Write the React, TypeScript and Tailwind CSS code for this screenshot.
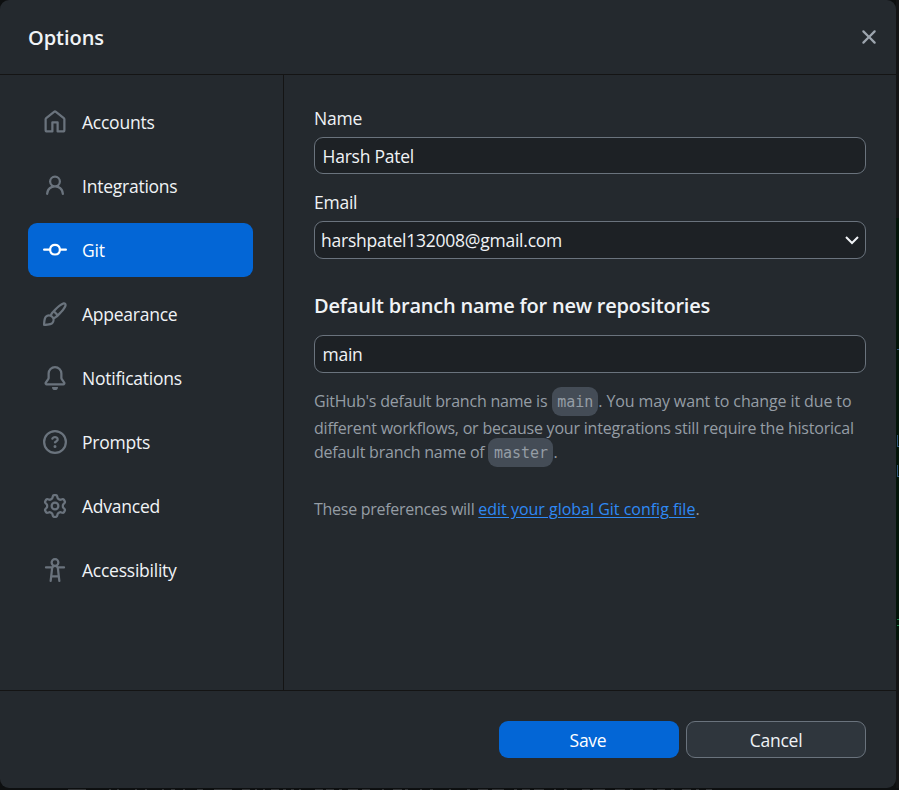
import React from 'react';

const icons = {
  home: 'M6.906.664a1.749 1.749 0 0 1 2.187 0l5.25 4.2c.415.332.657.835.657 1.367v7.019A1.75 1.75 0 0 1 13.25 15h-3.5a.75.75 0 0 1-.75-.75V9H7v5.25a.75.75 0 0 1-.75.75h-3.5A1.75 1.75 0 0 1 1 13.25V6.23c0-.531.242-1.034.657-1.366l5.25-4.2Zm1.25 1.171a.25.25 0 0 0-.312 0l-5.25 4.2a.25.25 0 0 0-.094.196v7.019c0 .138.112.25.25.25H5.5V8.25a.75.75 0 0 1 .75-.75h3.5a.75.75 0 0 1 .75.75v5.25h2.75a.25.25 0 0 0 .25-.25V6.23a.25.25 0 0 0-.094-.195Z',
  person: 'M10.561 8.073a6.005 6.005 0 0 1 3.432 5.142.75.75 0 1 1-1.498.07 4.5 4.5 0 0 0-8.99 0 .75.75 0 0 1-1.498-.07 6.004 6.004 0 0 1 3.431-5.142 3.999 3.999 0 1 1 5.123 0ZM10.5 5a2.5 2.5 0 1 0-5 0 2.5 2.5 0 0 0 5 0Z',
  commit: 'M11.93 8.5a4.002 4.002 0 0 1-7.86 0H.75a.75.75 0 0 1 0-1.5h3.32a4.002 4.002 0 0 1 7.86 0h3.32a.75.75 0 0 1 0 1.5Zm-1.43-.75a2.5 2.5 0 1 0-5 0 2.5 2.5 0 0 0 5 0Z',
  brush: 'M11.134 1.535c.7-.509 1.416-.942 2.076-1.155.649-.21 1.463-.267 2.069.34.603.601.568 1.411.368 2.07-.202.668-.624 1.39-1.125 2.096-1.011 1.424-2.496 2.987-3.775 4.249-1.098 1.084-2.132 1.839-3.04 2.3a3.744 3.744 0 0 1-1.055 3.217c-.431.431-1.065.691-1.657.861-.614.177-1.294.287-1.914.357A21.151 21.151 0 0 1 .797 16H.743l.007-.75H.749L.742 16a.75.75 0 0 1-.743-.742l.743-.008-.742.007v-.054a21.25 21.25 0 0 1 .13-2.284c.067-.647.187-1.287.358-1.914.17-.591.43-1.226.86-1.657a3.746 3.746 0 0 1 3.227-1.054c.466-.893 1.225-1.907 2.314-2.982 1.271-1.255 2.833-2.75 4.245-3.777ZM1.62 13.089c-.051.464-.086.929-.104 1.395.466-.018.932-.053 1.396-.104a10.511 10.511 0 0 0 1.668-.309c.526-.151.856-.325 1.011-.48a2.25 2.25 0 1 0-3.182-3.182c-.155.155-.329.485-.48 1.01a10.515 10.515 0 0 0-.309 1.67Zm10.396-10.34c-1.224.89-2.605 2.189-3.822 3.384l1.718 1.718c1.21-1.205 2.51-2.597 3.387-3.833.47-.662.78-1.227.912-1.662.134-.444.032-.551.009-.575h-.001V1.78c-.014-.014-.113-.113-.548.027-.432.14-.995.462-1.655.942Zm-4.832 7.266-.001.001a9.859 9.859 0 0 0 1.63-1.142L7.155 7.216a9.7 9.7 0 0 0-1.161 1.607c.482.302.889.71 1.19 1.192Z',
  bell: 'M8 16a2 2 0 0 0 1.985-1.75c.017-.137-.097-.25-.235-.25h-3.5c-.138 0-.252.113-.235.25A2 2 0 0 0 8 16ZM3 5a5 5 0 0 1 10 0v2.947c0 .05.015.098.042.139l1.703 2.555A1.519 1.519 0 0 1 13.482 13H2.518a1.516 1.516 0 0 1-1.263-2.36l1.703-2.554A.255.255 0 0 0 3 7.947Zm5-3.5A3.5 3.5 0 0 0 4.5 5v2.947c0 .346-.102.683-.294.97l-1.703 2.556a.017.017 0 0 0-.003.01l.001.006c0 .002.002.004.004.006l.006.004.007.001h10.964l.007-.001.006-.004.004-.006.001-.007a.017.017 0 0 0-.003-.01l-1.703-2.554a1.745 1.745 0 0 1-.294-.97V5A3.5 3.5 0 0 0 8 1.5Z',
  question: 'M0 8a8 8 0 1 1 16 0A8 8 0 0 1 0 8Zm8-6.5a6.5 6.5 0 1 0 0 13 6.5 6.5 0 0 0 0-13ZM6.92 6.085h.001a.749.749 0 1 1-1.342-.67c.169-.339.436-.701.849-.977C6.845 4.16 7.369 4 8 4a2.756 2.756 0 0 1 1.637.525c.503.377.863.965.863 1.725 0 .448-.115.83-.329 1.15-.205.307-.47.513-.692.662-.109.072-.22.138-.313.195l-.006.004a6.24 6.24 0 0 0-.26.16.952.952 0 0 0-.276.245.75.75 0 0 1-1.248-.832c.184-.264.42-.489.692-.661.103-.067.207-.132.313-.195l.007-.004c.1-.061.182-.11.258-.161a.969.969 0 0 0 .277-.245C8.96 6.514 9 6.427 9 6.25a.612.612 0 0 0-.262-.525A1.27 1.27 0 0 0 8 5.5c-.369 0-.595.09-.74.187a1.01 1.01 0 0 0-.34.398ZM9 11a1 1 0 1 1-2 0 1 1 0 0 1 2 0Z',
  gear: 'M8 0a8.2 8.2 0 0 1 .701.031C9.444.095 9.99.645 10.16 1.29l.288 1.107c.018.066.079.158.212.224.231.114.454.243.668.386.123.082.233.09.299.071l1.103-.303c.644-.176 1.392.021 1.82.63.27.385.506.792.704 1.218.315.675.111 1.422-.364 1.891l-.814.806c-.049.048-.098.147-.088.294.016.257.016.515 0 .772-.01.147.038.246.088.294l.814.806c.475.469.679 1.216.364 1.891a7.977 7.977 0 0 1-.704 1.217c-.428.61-1.176.807-1.82.63l-1.102-.302c-.067-.019-.177-.011-.3.071a5.909 5.909 0 0 1-.668.386c-.133.066-.194.158-.211.224l-.29 1.106c-.168.646-.715 1.196-1.458 1.26a8.006 8.006 0 0 1-1.402 0c-.743-.064-1.289-.614-1.458-1.26l-.289-1.106c-.018-.066-.079-.158-.212-.224a5.738 5.738 0 0 1-.668-.386c-.123-.082-.233-.09-.299-.071l-1.103.303c-.644.176-1.392-.021-1.82-.63a8.12 8.12 0 0 1-.704-1.218c-.315-.675-.111-1.422.363-1.891l.815-.806c.05-.048.098-.147.088-.294a6.214 6.214 0 0 1 0-.772c.01-.147-.038-.246-.088-.294l-.815-.806C.635 6.045.431 5.298.746 4.623a7.92 7.92 0 0 1 .704-1.217c.428-.61 1.176-.807 1.82-.63l1.102.302c.067.019.177.011.3-.071.214-.143.437-.272.668-.386.133-.066.194-.158.211-.224l.29-1.106C6.009.645 6.556.095 7.299.03 7.53.01 7.764 0 8 0Zm-.571 1.525c-.036.003-.108.036-.137.146l-.289 1.105c-.147.561-.549.967-.998 1.189-.173.086-.34.183-.5.29-.417.278-.97.423-1.529.27l-1.103-.303c-.109-.03-.175.016-.195.045-.22.312-.412.644-.573.99-.014.031-.021.11.059.19l.815.806c.411.406.562.957.53 1.456a4.709 4.709 0 0 0 0 .582c.032.499-.119 1.05-.53 1.456l-.815.806c-.081.08-.073.159-.059.19.162.346.353.677.573.989.02.03.085.076.195.046l1.102-.303c.56-.153 1.113-.008 1.53.27.161.107.328.204.501.29.447.222.85.629.997 1.189l.289 1.105c.029.109.101.143.137.146a6.6 6.6 0 0 0 1.142 0c.036-.003.108-.036.137-.146l.289-1.105c.147-.561.549-.967.998-1.189.173-.086.34-.183.5-.29.417-.278.97-.423 1.529-.27l1.103.303c.109.029.175-.016.195-.045.22-.313.411-.644.573-.99.014-.031.021-.11-.059-.19l-.815-.806c-.411-.406-.562-.957-.53-1.456a4.709 4.709 0 0 0 0-.582c-.032-.499.119-1.05.53-1.456l.815-.806c.081-.08.073-.159.059-.19a6.464 6.464 0 0 0-.573-.989c-.02-.03-.085-.076-.195-.046l-1.102.303c-.56.153-1.113.008-1.53-.27a4.44 4.44 0 0 0-.501-.29c-.447-.222-.85-.629-.997-1.189l-.289-1.105c-.029-.11-.101-.143-.137-.146a6.6 6.6 0 0 0-1.142 0ZM11 8a3 3 0 1 1-6 0 3 3 0 0 1 6 0ZM9.5 8a1.5 1.5 0 1 0-3.001.001A1.5 1.5 0 0 0 9.5 8Z',
  accessibility: 'M9.923 5.302c.063.063.122.129.178.198H14A.75.75 0 0 1 14 7h-3.3l.578 5.163.362 2.997a.75.75 0 0 1-1.49.18L9.868 13H6.132l-.282 2.34a.75.75 0 0 1-1.49-.18l.362-2.997L5.3 7H2a.75.75 0 0 1 0-1.5h3.9a2.54 2.54 0 0 1 .176-.198 3 3 0 1 1 3.847 0ZM9.2 7.073h-.001a1.206 1.206 0 0 0-2.398 0L6.305 11.5h3.39ZM9.5 3a1.5 1.5 0 1 0-3.001.001A1.5 1.5 0 0 0 9.5 3Z',
  close: 'M3.72 3.72a.75.75 0 0 1 1.06 0L8 6.94l3.22-3.22a.749.749 0 0 1 1.275.326.749.749 0 0 1-.215.734L9.06 8l3.22 3.22a.749.749 0 0 1-.326 1.275.749.749 0 0 1-.734-.215L8 9.06l-3.22 3.22a.751.751 0 0 1-1.042-.018.751.751 0 0 1-.018-1.042L6.94 8 3.72 4.78a.75.75 0 0 1 0-1.06Z',
};

type IconName = keyof typeof icons;

function Icon({ name, className = '' }: { name: IconName; className?: string }) {
  return (
    <svg viewBox="0 0 16 16" className={`size-6 shrink-0 fill-current ${className}`} aria-hidden="true">
      <path fillRule="evenodd" d={icons[name]} />
    </svg>
  );
}

const tabs: { label: string; icon: IconName }[] = [
  { label: 'Accounts', icon: 'home' },
  { label: 'Integrations', icon: 'person' },
  { label: 'Git', icon: 'commit' },
  { label: 'Appearance', icon: 'brush' },
  { label: 'Notifications', icon: 'bell' },
  { label: 'Prompts', icon: 'question' },
  { label: 'Advanced', icon: 'gear' },
  { label: 'Accessibility', icon: 'accessibility' },
];

function Code({ children, className }: { children: string; className: string }) {
  return (
    <code className={`flex h-[29px] items-center justify-center rounded-[9px] bg-[#444c56] font-['DejaVu_Sans_Mono',monospace] text-[15px] tracking-normal ${className}`}>
      {children}
    </code>
  );
}

/* Tops of the text line of the window behind, as [gap before, width]. */
const behind = [
  [68, 18], [23, 2], [6, 2], [16, 2], [8, 2], [15, 2], [7, 4], [8, 2], [12, 6], [11, 18],
  [10, 8], [5, 2], [6, 2], [6, 8], [4, 3], [5, 3], [5, 2], [14, 8], [3, 8], [5, 3],
  [6, 10], [4, 8], [12, 2], [9, 9], [3, 3], [12, 2], [8, 3], [16, 2], [16, 3], [8, 10],
  [4, 12], [10, 3], [5, 8], [4, 10], [10, 2], [8, 3], [15, 8], [3, 12], [10, 10], [5, 3],
  [12, 8], [4, 8], [6, 3], [8, 9], [5, 3], [7, 6],
];

export default function App() {
  return (
    <div className="flex h-[790px] w-[899px] flex-col overflow-hidden bg-[#0d0f10] font-['Open_Sans',sans-serif] text-[17.5px] leading-6 tracking-[-0.24px] text-[#f0f3f6]">
      <div className="flex h-[788px] shrink-0">
        <div className="flex w-[896px] flex-col overflow-hidden rounded-[9px] bg-[#24292e]">
          <header className="flex h-[75px] shrink-0 items-center justify-between border-b border-[#141414] pr-[15px] pl-7">
            <h1 className="pt-0.5 text-[20px] font-semibold tracking-[-0.05px]">Options</h1>
            <button className="text-[#9da5ae]" aria-label="Close">
              <Icon name="close" className="block" />
            </button>
          </header>

          <div className="flex min-h-0 flex-1">
            <nav className="flex w-[284px] shrink-0 flex-col gap-2.5 border-r border-[#141414] pt-5 pr-[30px] pl-7">
              {tabs.map((t) => (
                <button
                  key={t.label}
                  className={`flex h-[54px] items-center gap-[15px] rounded-[9px] pl-[15px] ${t.label === 'Git' ? 'bg-[#0366d6] text-white' : ''}`}
                >
                  <Icon name={t.icon} className={t.label === 'Git' ? 'text-white' : 'text-[#6a737d]'} />
                  <span>{t.label}</span>
                </button>
              ))}
            </nav>

            <main className="flex min-w-0 flex-1 flex-col pt-[31px] pr-[30px] pl-[30px]">
              <label className="flex"><span>Name</span></label>
              <div className="mt-[7px] flex h-[37px] items-center rounded-[9px] border border-[#6a737d] bg-[#1d2125] px-[7.5px]">
                <span>Harsh Patel</span>
              </div>
              <label className="mt-[16px] flex"><span>Email</span></label>
              <div className="mt-[7px] flex h-[38px] items-center justify-between rounded-[9px] border border-[#6a737d] bg-[#1d2125] pr-[6px] pb-px pl-[6px]">
                <span>harshpatel132008@gmail.com</span>
                <svg viewBox="0 0 14 10" className="h-[10px] w-[14px]" fill="none" stroke="currentColor" strokeWidth="2">
                  <path d="M1 2l6 6 6-6" />
                </svg>
              </div>
              <h2 className="mt-[35px] flex text-[20px] font-semibold tracking-[-0.21px] whitespace-nowrap"><span>Default branch name for new repositories</span></h2>
              <div className="mt-[17px] flex h-[38px] items-center rounded-[9px] border border-[#6a737d] bg-[#1d2125] px-[7.5px] pb-px">
                <span>main</span>
              </div>
              <div className="mt-[14px] text-[16px] tracking-[-0.21px] whitespace-nowrap text-[#959da5]">
                <p className="flex h-[29px] items-center">
                  <span className="pb-0.5">GitHub's default branch name is</span>
                  <Code className="ml-[5px] w-[46px]">main</Code>
                  <span className="pb-0.5 tracking-[-0.12px]">. You may want to change it due to</span>
                </p>
                <p className="flex h-[22px] items-center">
                  <span className="pt-0.5">different workflows, or because your integrations still require the historical</span>
                </p>
                <p className="flex h-[29px] items-center">
                  <span className="pb-0.5">default branch name of</span>
                  <Code className="ml-[4px] w-[65px]">master</Code>
                  <span className="pb-0.5">.</span>
                </p>
              </div>
              <p className="mt-[30px] flex text-[16px] tracking-[-0.27px] whitespace-nowrap text-[#959da5]">
                <span>These preferences will&nbsp;</span>
                <a className="tracking-[-0.01px] text-[#2f8af5] underline underline-offset-2">edit your global Git config file</a>
                <span>.</span>
              </p>
            </main>
          </div>

          <footer className="flex h-[98px] shrink-0 justify-end gap-[7px] border-t border-[#141414] pt-[30px] pr-[30px]">
            <button className="flex h-[37px] w-[180px] items-center justify-center rounded-[9px] bg-[#0366d6] pr-0.5 text-white">
              <span>Save</span>
            </button>
            <button className="flex h-[37px] w-[180px] items-center justify-center rounded-[9px] border border-[#6a737d] bg-[#2f363d]">
              <span>Cancel</span>
            </button>
          </footer>
        </div>

        <div className="flex w-[3px] flex-col">
          <div className="h-[218px] bg-[#131415]" />
          <div className="flex h-[422px] flex-col items-end bg-[#04140a]">
            <div className="mt-[131px] h-px w-0.5 bg-[#33567c]" />
            <div className="mt-[85px] h-3 w-0.5 border-b border-l border-[#33567c]" />
            <div className="mt-[18px] h-3 w-0.5 border-b border-l border-[#33567c]" />
            <div className="mt-[142px] h-px w-0.5 bg-[#1c7a45]" />
            <div className="mt-[5px] h-px w-0.5 bg-[#1c7a45]" />
          </div>
          <div className="flex-1 bg-[#131415]" />
        </div>
      </div>
      <div className="mt-px flex h-px">
        {behind.map(([gap, width], i) => (
          <i key={i} className="block h-px shrink-0 bg-[#303234]" style={{ marginLeft: gap, width }} />
        ))}
      </div>
    </div>
  );
}
